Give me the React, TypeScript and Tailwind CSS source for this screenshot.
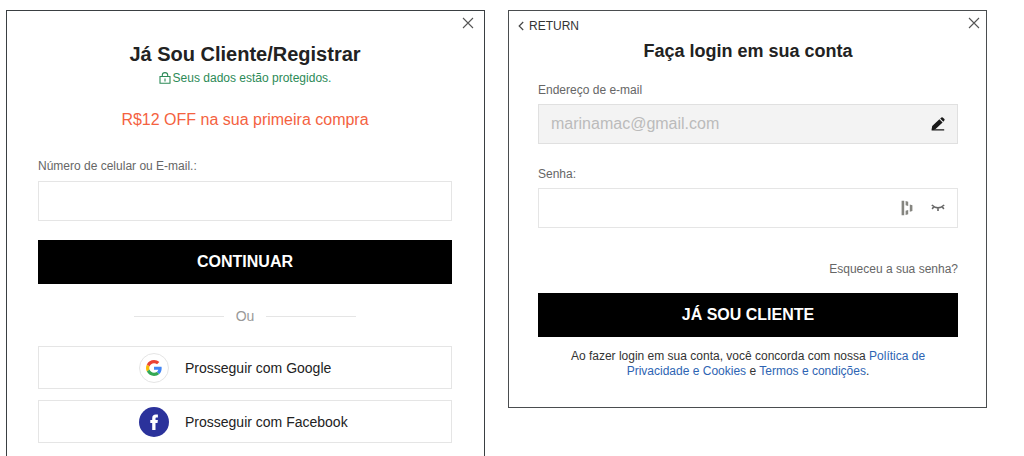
import { useState, type ReactNode } from "react";

function CloseIcon() {
  return (
    <svg viewBox="0 0 12 12" className="size-3" fill="none" stroke="#555" strokeWidth="1.1" aria-hidden="true">
      <path d="M1 1 11 11M11 1 1 11" />
    </svg>
  );
}

function CloseButton({ className }: { className: string }) {
  return (
    <button type="button" aria-label="Fechar" className={`absolute ${className}`}>
      <CloseIcon />
    </button>
  );
}

function LockIcon() {
  return (
    <svg viewBox="0 0 12 12" className="size-3" fill="none" stroke="#2c8a57" strokeWidth="1.1" aria-hidden="true">
      <path d="M1 4.5H11V11.3H1ZM3.3 4.5V3A2.7 2.4 0 0 1 8.7 3V4.5M6 6.6V9.4" />
    </svg>
  );
}

function GoogleIcon() {
  return (
    <svg viewBox="0 0 48 48" className="size-4" aria-hidden="true">
      <path fill="#EA4335" d="M24 9.5c3.54 0 6.71 1.22 9.21 3.6l6.85-6.85C35.9 2.38 30.47 0 24 0 14.62 0 6.51 5.38 2.56 13.22l7.98 6.19C12.43 13.72 17.74 9.5 24 9.5z" />
      <path fill="#4285F4" d="M46.98 24.55c0-1.57-.15-3.09-.38-4.55H24v9.02h12.94c-.58 2.96-2.26 5.48-4.78 7.18l7.73 6c4.51-4.18 7.09-10.36 7.09-17.65z" />
      <path fill="#FBBC05" d="M10.53 28.59c-.48-1.45-.76-2.99-.76-4.59s.27-3.14.76-4.59l-7.98-6.19C.92 16.46 0 20.12 0 24c0 3.88.92 7.54 2.56 10.78l7.97-6.19z" />
      <path fill="#34A853" d="M24 48c6.48 0 11.93-2.13 15.89-5.81l-7.73-6c-2.15 1.45-4.92 2.3-8.16 2.3-6.26 0-11.57-4.22-13.47-9.91l-7.98 6.19C6.51 42.62 14.62 48 24 48z" />
    </svg>
  );
}

function FacebookIcon() {
  return (
    <svg viewBox="0 0 30 30" className="size-[30px]" aria-hidden="true">
      <circle cx="15" cy="15" r="15" fill="#2b329b" />
      <path fill="#fff" d="M13.2 23V16H11.3V13H13.2V11.3C13.2 8.8 14.5 7.6 16.8 7.6H18.9V10.6H17.6C16.8 10.6 16.5 11 16.5 11.8V13H18.9L18.5 16H16.5V23Z" />
    </svg>
  );
}

function PencilIcon() {
  return (
    <svg viewBox="0 0 14 14" className="size-3.5" fill="#1a1a1a" aria-hidden="true">
      <path d="M.6 12.6 1.2 9 8.4 2.2 11.6 5.5 4.6 12.1ZM9.2 1.5 10.4.4Q11-.1 11.7.4L13.4 2.1Q13.9 2.8 13.3 3.4L12.3 4.7ZM.6 12.2H13.2V13.5H.6Z" />
    </svg>
  );
}

function PasswordManagerIcon() {
  return (
    <svg viewBox="0 0 12 16" className="h-4 w-3" fill="#858580" aria-hidden="true">
      <path d="M.6.8H3.2V15.2H.6ZM4.6 1 7.2 1.8V6L4.6 5.2ZM4.6 10.8 7.2 10V14.2L4.6 15ZM8.8 4.4 11.4 5.2V11L8.8 11.8Z" />
    </svg>
  );
}

function EyeClosedIcon() {
  return (
    <svg viewBox="0 0 14 8" className="h-2 w-3.5" fill="none" stroke="#666" strokeWidth="1.6" aria-hidden="true">
      <path d="M.8 1Q7 6.6 13.2 1M2.8 2.6 1.2 5M7 3.8V7M11.2 2.6 12.8 5" />
    </svg>
  );
}

function PrimaryButton({ children }: { children: ReactNode }) {
  return (
    <button type="submit" className="h-11 w-full bg-black text-base font-bold text-white">
      {children}
    </button>
  );
}

function SocialButton({ icon, children }: { icon: ReactNode; children: ReactNode }) {
  return (
    <button
      type="button"
      className="flex h-[43px] w-full items-center gap-4 border border-[#e5e5e5] pl-[100px] text-sm text-[#222]"
    >
      {icon}
      {children}
    </button>
  );
}

function RegisterPanel() {
  return (
    <section className="relative border border-b-0 border-[#3a3f42] pt-[29px] pr-8 pb-3 pl-[31px]">
      <CloseButton className="top-1.5 right-2.5" />
      <h1 className="text-center text-xl leading-7 font-bold text-[#222]">Já Sou Cliente/Registrar</h1>
      <p className="mt-0.5 flex items-center justify-center gap-0.5 text-xs text-[#2c8a57]">
        <LockIcon />
        Seus dados estão protegidos.
      </p>
      <p className="mt-[22px] text-center text-base text-[#f4623f]">R$12 OFF na sua primeira compra</p>
      <form onSubmit={(e) => e.preventDefault()}>
        <label htmlFor="contact" className="mt-[26px] block text-xs text-[#666]">
          Número de celular ou E-mail.:
        </label>
        <input id="contact" type="text" className="mt-[7px] mb-[19px] block h-10 w-full border border-[#e5e5e5] px-3" />
        <PrimaryButton>CONTINUAR</PrimaryButton>
      </form>
      <div className="mt-5 flex items-center justify-center gap-3 text-sm leading-6 text-[#999]">
        <span className="h-px w-[90px] bg-[#e5e5e5]" />
        Ou
        <span className="h-px w-[90px] bg-[#e5e5e5]" />
      </div>
      <div className="mt-[18px] flex flex-col gap-[11px]">
        <SocialButton
          icon={
            <span className="flex size-[30px] items-center justify-center rounded-full border border-[#e5e5e5]">
              <GoogleIcon />
            </span>
          }
        >
          Prosseguir com Google
        </SocialButton>
        <SocialButton icon={<FacebookIcon />}>Prosseguir com Facebook</SocialButton>
      </div>
    </section>
  );
}

function LoginPanel() {
  const [visible, setVisible] = useState(false);
  return (
    <section className="relative self-start border border-[#4a4d4f] pt-[7px] pr-7 pb-7 pl-[29px]">
      <CloseButton className="top-1.5 right-1.5" />
      <button type="button" className="-ml-5 flex items-center gap-[5px] text-xs text-[#333]">
        <svg viewBox="0 0 6 10" className="h-2.5 w-1.5" fill="none" stroke="#444" strokeWidth="1.2" aria-hidden="true">
          <path d="M5.2 1 1.2 5 5.2 9" />
        </svg>
        RETURN
      </button>
      <h1 className="mt-[5px] text-center text-lg leading-6 font-bold text-[#222]">Faça login em sua conta</h1>
      <form onSubmit={(e) => e.preventDefault()}>
        <label htmlFor="email" className="mt-[19px] block text-xs text-[#666]">
          Endereço de e-mail
        </label>
        <div className="mt-1.5 flex h-10 items-center border border-[#e0e0e0] bg-[#f3f3f3] px-3">
          <input
            id="email"
            type="email"
            readOnly
            value="marinamac@gmail.com"
            className="min-w-0 flex-1 bg-transparent text-base text-[#bbb] outline-none"
          />
          <button type="button" aria-label="Editar e-mail">
            <PencilIcon />
          </button>
        </div>
        <label htmlFor="password" className="mt-[22px] block text-xs text-[#666]">
          Senha:
        </label>
        <div className="mt-1.5 flex h-10 items-center gap-[18px] border border-[#e5e5e5] px-3">
          <input
            id="password"
            type={visible ? "text" : "password"}
            className="min-w-0 flex-1 bg-transparent text-base outline-none"
          />
          <PasswordManagerIcon />
          <button type="button" aria-label="Mostrar senha" onClick={() => setVisible(!visible)}>
            <EyeClosedIcon />
          </button>
        </div>
        <div className="mt-[33px] mb-4 flex justify-end text-xs">
          <a href="#senha" className="text-[#666]">
            Esqueceu a sua senha?
          </a>
        </div>
        <PrimaryButton>JÁ SOU CLIENTE</PrimaryButton>
      </form>
      <p className="mt-3 px-6 text-center text-xs leading-[15px] text-[#333]">
        Ao fazer login em sua conta, você concorda com nossa{" "}
        <a href="#privacidade" className="text-[#2d64b3]">
          Política de Privacidade e Cookies
        </a>{" "}
        e{" "}
        <a href="#termos" className="text-[#2d64b3]">
          Termos e condições
        </a>
        .
      </p>
    </section>
  );
}

export default function App() {
  return (
    <main className="grid min-h-screen grid-cols-2 gap-[23px] bg-white pt-2.5 pr-[37px] pl-1.5 font-['Liberation_Sans',Arial,sans-serif]">
      <RegisterPanel />
      <LoginPanel />
    </main>
  );
}
